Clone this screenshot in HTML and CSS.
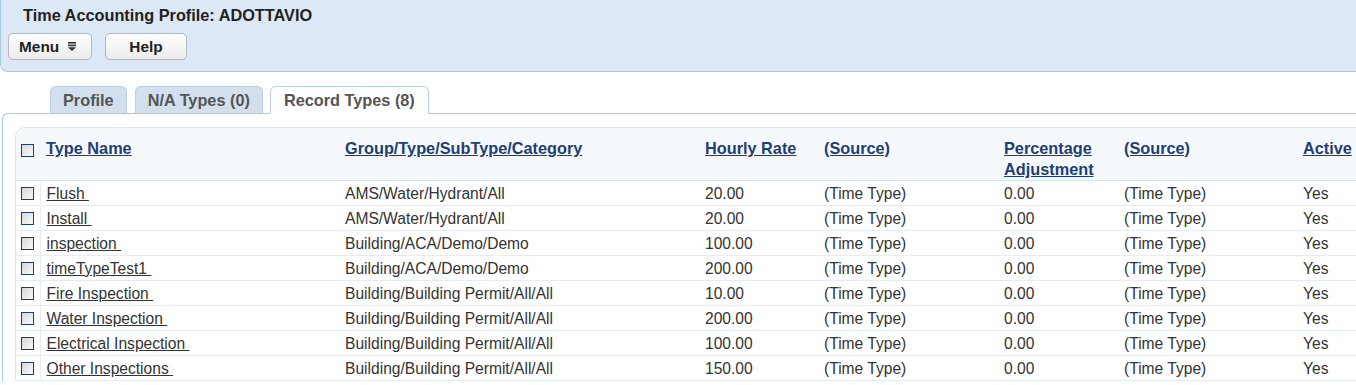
FILE: index.html
```html
<!DOCTYPE html>
<html lang="en">
<head>
    <meta charset="UTF-8">
    <title>Time Accounting Profile</title>
    <link rel="stylesheet" href="styles.css">
</head>
<body>
    <div class="header">
        <div class="title">Time Accounting Profile: ADOTTAVIO</div>
        <div class="buttons">
            <button class="btn menu-btn">Menu
                <svg width="8" height="9" viewBox="0 0 8 9"><rect x="0" y="0" width="8" height="1.6" fill="#333"/><rect x="0" y="2.6" width="8" height="1.6" fill="#333"/><polygon points="0,5.2 8,5.2 4,9" fill="#333"/></svg>
            </button>
            <button class="btn help-btn">Help</button>
        </div>
    </div>

    <div class="tabs">
        <div class="tab">Profile</div>
        <div class="tab">N/A Types (0)</div>
        <div class="tab active">Record Types (8)</div>
    </div>

    <div class="panel">
        <div class="grid">
            <table>
                <colgroup>
                    <col style="width:24px">
                    <col style="width:299px">
                    <col style="width:360px">
                    <col style="width:119px">
                    <col style="width:180px">
                    <col style="width:120px">
                    <col style="width:179px">
                    <col>
                </colgroup>
                <thead>
                    <tr>
                        <th class="check"><span class="cb"></span></th>
                        <th><a href="#">Type Name</a></th>
                        <th><a href="#">Group/Type/SubType/Category</a></th>
                        <th><a href="#">Hourly Rate</a></th>
                        <th><a href="#">(Source)</a></th>
                        <th><a href="#">Percentage<br>Adjustment</a></th>
                        <th><a href="#">(Source)</a></th>
                        <th><a href="#">Active</a></th>
                    </tr>
                </thead>
                <tbody>
                    <tr><td class="check"><span class="cb"></span></td><td><a href="#">Flush&nbsp;</a></td><td>AMS/Water/Hydrant/All</td><td>20.00</td><td>(Time Type)</td><td>0.00</td><td>(Time Type)</td><td>Yes</td></tr>
                    <tr><td class="check"><span class="cb"></span></td><td><a href="#">Install&nbsp;</a></td><td>AMS/Water/Hydrant/All</td><td>20.00</td><td>(Time Type)</td><td>0.00</td><td>(Time Type)</td><td>Yes</td></tr>
                    <tr><td class="check"><span class="cb"></span></td><td><a href="#">inspection&nbsp;</a></td><td>Building/ACA/Demo/Demo</td><td>100.00</td><td>(Time Type)</td><td>0.00</td><td>(Time Type)</td><td>Yes</td></tr>
                    <tr><td class="check"><span class="cb"></span></td><td><a href="#">timeTypeTest1&nbsp;</a></td><td>Building/ACA/Demo/Demo</td><td>200.00</td><td>(Time Type)</td><td>0.00</td><td>(Time Type)</td><td>Yes</td></tr>
                    <tr><td class="check"><span class="cb"></span></td><td><a href="#">Fire Inspection&nbsp;</a></td><td>Building/Building Permit/All/All</td><td>10.00</td><td>(Time Type)</td><td>0.00</td><td>(Time Type)</td><td>Yes</td></tr>
                    <tr><td class="check"><span class="cb"></span></td><td><a href="#">Water Inspection&nbsp;</a></td><td>Building/Building Permit/All/All</td><td>200.00</td><td>(Time Type)</td><td>0.00</td><td>(Time Type)</td><td>Yes</td></tr>
                    <tr><td class="check"><span class="cb"></span></td><td><a href="#">Electrical Inspection&nbsp;</a></td><td>Building/Building Permit/All/All</td><td>100.00</td><td>(Time Type)</td><td>0.00</td><td>(Time Type)</td><td>Yes</td></tr>
                    <tr><td class="check"><span class="cb"></span></td><td><a href="#">Other Inspections&nbsp;</a></td><td>Building/Building Permit/All/All</td><td>150.00</td><td>(Time Type)</td><td>0.00</td><td>(Time Type)</td><td>Yes</td></tr>
                </tbody>
            </table>
        </div>
    </div>
</body>
</html>
```

FILE: styles.css
```css
* { margin: 0; padding: 0; box-sizing: border-box; }
html, body { overflow: hidden; }
body {
    font-family: "Liberation Sans", Arial, sans-serif;
    font-size: 15.6px;
    color: #333;
    background: #fff;
}
.header {
    background: #dce8f5;
    border: 1px solid #a9c8e8;
    border-top: none;
    border-right: none;
    border-radius: 0 0 0 8px;
    padding: 5px 7px 11px 7px;
}
.title {
    font-size: 16.3px;
    font-weight: bold;
    line-height: 20px;
    color: #222;
    padding-left: 15px;
}
.buttons {
    display: flex;
    gap: 13px;
    margin-top: 8px;
}
.btn {
    height: 27px;
    border: 1px solid #b4b8bd;
    border-radius: 5px;
    background: linear-gradient(#ffffff, #ececec);
    font-family: inherit;
    font-size: 15.4px;
    font-weight: bold;
    color: #222;
    display: flex;
    align-items: center;
}
.menu-btn { width: 84px; padding: 0 0 0 10px; gap: 9px; }
.help-btn { width: 82px; justify-content: center; }

.tabs {
    display: flex;
    gap: 8px;
    padding-left: 50px;
    margin-top: 14px;
    margin-bottom: -1px;
    position: relative;
}
.tab {
    height: 28px;
    line-height: 25px;
    padding: 1px 12px 0;
    font-size: 16.3px;
    font-weight: bold;
    color: #555;
    background: #d3dfed;
    border: 1px solid #b8cfe8;
    border-bottom: 1px solid #a9c8e8;
    border-radius: 6px 6px 0 0;
}
.tab.active {
    background: #fff;
    border-bottom-color: #fff;
    padding: 1px 13px 0;
    margin-left: -1px;
}

.panel {
    margin-left: 2px;
    border: 1px solid #a9c8e8;
    border-right: none;
    border-bottom: none;
    border-radius: 6px 0 0 0;
    padding: 13px 0 0 12px;
}
.grid {
    border-top: 1px solid #d5e3f2;
    border-left: 1px solid #d5e3f2;
    border-radius: 10px 0 0 0;
    overflow: hidden;
}
table {
    width: 100%;
    table-layout: fixed;
    border-collapse: collapse;
}
th {
    background: #f5f9fd;
    text-align: left;
    vertical-align: top;
    font-size: 16.3px;
    font-weight: bold;
    line-height: 21px;
    padding: 10px 6px 0;
    border-bottom: 1px solid #d3e2f1;
    white-space: nowrap;
}
th a { color: #1e3f73; }
td {
    height: 25px;
    line-height: 22px;
    padding: 2px 6px 0;
    border-bottom: 1px solid #e4ecf5;
    white-space: nowrap;
    vertical-align: top;
}
td a { color: #333; }
td.check, th.check {
    padding: 0 0 0 5px;
    border-right: 1px solid #e4ecf5;
}
th.check { border-right: none; padding-top: 16px; line-height: 0; }
td.check { padding-top: 6px; line-height: 0; }
.cb {
    display: inline-block;
    width: 13px;
    height: 13px;
    border: 1px solid #1e3f6e;
    background: linear-gradient(135deg, #d6d6d6, #fafafa);
}
```
